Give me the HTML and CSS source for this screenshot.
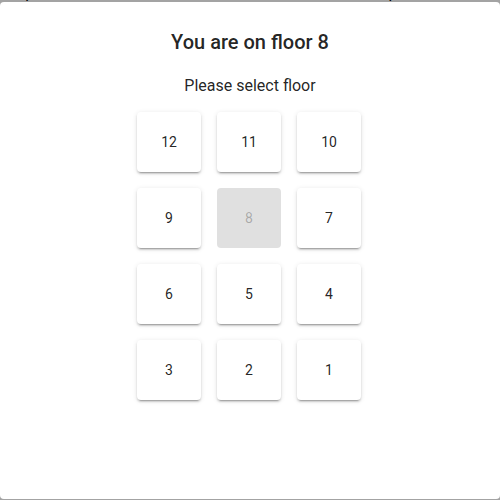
FILE: index.html
```html
<!DOCTYPE html>
<html>
<head>
<meta charset="utf-8">
<link rel="stylesheet" href="styles.css">
</head>
<body>
<div class="page">
  <div class="status-row">
    <span class="status s1">Door open</span>
    <span class="status s2">Doors closed</span>
    <span class="status s3">Doors open</span>
  </div>
</div>
<div class="scrim"></div>
<div class="dialog">
  <h1 class="title">You are on floor 8</h1>
  <p class="subtitle">Please select floor</p>
  <div class="grid">
    <button class="floor">12</button>
    <button class="floor">11</button>
    <button class="floor">10</button>
    <button class="floor">9</button>
    <button class="floor" disabled>8</button>
    <button class="floor">7</button>
    <button class="floor">6</button>
    <button class="floor">5</button>
    <button class="floor">4</button>
    <button class="floor">3</button>
    <button class="floor">2</button>
    <button class="floor">1</button>
  </div>
</div>
</body>
</html>
```
FILE: styles.css
```css
html, body {
  margin: 0;
  padding: 0;
  width: 500px;
  height: 500px;
  overflow: hidden;
  background: #fff;
  font-family: Roboto, "Liberation Sans", sans-serif;
}
.page {
  height: 500px;
}
.status-row {
  display: flex;
  margin-top: -15px;
  height: 20px;
  font-size: 16px;
  line-height: 16px;
  color: #000;
}
.status { white-space: nowrap; }
.s1 { margin-left: -22px; width: 177px; }
.s2 { width: 178px; }
.scrim {
  position: fixed;
  inset: 0;
  background: rgba(0, 0, 0, 0.36);
}
.dialog {
  position: fixed;
  left: 0;
  top: 2px;
  width: 500px;
  height: 497px;
  box-sizing: border-box;
  background: #fff;
  border-radius: 4px;
  padding: 24px 24px;
  display: flex;
  flex-direction: column;
  align-items: center;
}
.title {
  margin: 0;
  font-size: 20px;
  font-weight: 500;
  line-height: 32px;
  color: rgba(0, 0, 0, 0.87);
}
.subtitle {
  margin: 18px 0 0;
  font-size: 16px;
  line-height: 20px;
  color: rgba(0, 0, 0, 0.87);
}
.grid {
  margin-top: 16px;
  margin-left: -2px;
  display: grid;
  grid-template-columns: repeat(3, 64px);
  grid-auto-rows: 60px;
  gap: 16px;
}
.floor {
  border: none;
  border-radius: 4px;
  background: #fff;
  font-family: Roboto, "Liberation Sans", sans-serif;
  font-size: 14px;
  font-weight: 400;
  color: rgba(0, 0, 0, 0.87);
  padding: 0;
  box-shadow: 0 3px 1px -2px rgba(0,0,0,.2), 0 2px 2px 0 rgba(0,0,0,.14), 0 1px 5px 0 rgba(0,0,0,.12);
}
.floor:disabled {
  background: rgba(0, 0, 0, 0.12);
  color: rgba(0, 0, 0, 0.26);
  box-shadow: none;
}
```
